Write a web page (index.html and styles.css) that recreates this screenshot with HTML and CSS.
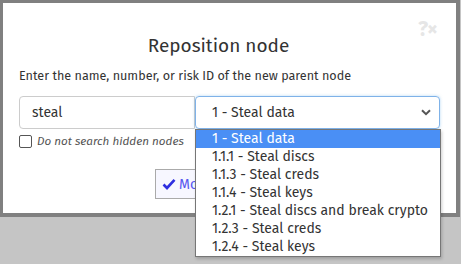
FILE: index.html
```html
<!DOCTYPE html>
<html lang="en">
<head>
  <meta charset="UTF-8" />
  <meta name="viewport" content="width=device-width, initial-scale=1.0"/>
  <title>Reposition node</title>
  <link rel="stylesheet" href="styles.css">
</head>
<body>
  <div class="dialog">
    <div class="dialog-tools">
      <span class="tool">?</span><span class="tool">&times;</span>
    </div>
    <h1 class="dialog-title">Reposition node</h1>
    <p class="hint">Enter the name, number, or risk ID of the new parent node</p>

    <div class="pick-row">
      <div class="text-box">steal</div>
      <div class="select-box">
        <span>1 - Steal data</span>
        <svg class="chevron" width="10" height="7" viewBox="0 0 10 7">
          <path d="M1 1.2 L5 5.2 L9 1.2" fill="none" stroke="#555" stroke-width="2"/>
        </svg>
        <!-- open option list -->
        <ul class="options">
          <li class="selected">1 - Steal data</li>
          <li>1.1.1 - Steal discs</li>
          <li>1.1.3 - Steal creds</li>
          <li>1.1.4 - Steal keys</li>
          <li>1.2.1 - Steal discs and break crypto</li>
          <li>1.2.3 - Steal creds</li>
          <li>1.2.4 - Steal keys</li>
        </ul>
      </div>
    </div>

    <label class="check-row">
      <span class="check-box"></span>
      <span class="check-label">Do not search hidden nodes</span>
    </label>

    <div class="actions">
      <button class="move-btn">
        <svg width="14" height="12" viewBox="0 0 14 12">
          <path d="M1.5 6.5 L5 10 L12.5 1.8" fill="none" stroke="#2e2ee0" stroke-width="2.6"/>
        </svg>
        Move
      </button>
    </div>
  </div>
  <div class="backdrop"></div>
</body>
</html>
```

FILE: styles.css
```css
body {
  margin: 0;
  background: #c5c5c5;
  font-family: 'Fira Sans', 'Open Sans', sans-serif;
  color: #333;
  min-height: 264px;
}

.dialog {
  position: relative;
  height: 210px;
  background: #fff;
  border: 3px solid #808080;
  border-bottom-width: 4px;
  border-right-width: 4px;
  padding: 0 16px;
  width: 421px;
}

.backdrop {
  height: 46px;
}

.dialog-tools {
  position: absolute;
  top: 13px;
  right: 19px;
  color: #e6e6e6;
  font-weight: bold;
  font-size: 21px;
  letter-spacing: -1px;
}

.dialog-title {
  margin: 0;
  padding: 29px 22px 0 0;
  font-size: 19px;
  font-weight: normal;
  text-align: center;
  line-height: 28px;
}

.hint {
  margin: 7px 0 0;
  font-size: 12.6px;
  line-height: 18px;
}

.pick-row {
  display: flex;
  margin-top: 11px;
}

.text-box {
  width: 162px;
  height: 31px;
  border: 1px solid #ccc;
  border-radius: 4px 0 0 4px;
  padding-left: 12px;
  font-size: 14px;
  line-height: 31px;
}

.select-box {
  position: relative;
  flex: 1;
  height: 31px;
  border: 1px solid #7fb2e8;
  border-radius: 4px;
  box-shadow: 0 0 3px rgba(102, 175, 233, 0.5);
  padding-left: 16px;
  font-size: 14px;
  line-height: 31px;
  display: flex;
  align-items: center;
}

.select-box span {
  flex: 1;
}

.chevron {
  margin-right: 8px;
}

.options {
  position: absolute;
  left: -1px;
  top: 32px;
  width: 244px;
  margin: 0;
  padding: 0;
  list-style: none;
  background: #fff;
  border: 1px solid #767676;
  box-shadow: 1px 2px 3px rgba(0, 0, 0, 0.2);
  z-index: 2;
}

.options li {
  height: 18px;
  line-height: 18px;
  padding-left: 16px;
  font-size: 14px;
}

.options li.selected {
  background: #4a8ff5;
  color: #fff;
}

.check-row {
  display: flex;
  align-items: center;
  margin-top: 5px;
}

.check-box {
  width: 11px;
  height: 11px;
  border: 1px solid #555;
  border-radius: 2px;
}

.check-label {
  margin-left: 5px;
  font-size: 11.7px;
  font-style: italic;
  color: #555;
}

.actions {
  display: flex;
  margin-top: 21px;
  padding-left: 136px;
}

.move-btn {
  display: flex;
  align-items: center;
  gap: 3px;
  height: 30px;
  width: 90px;
  padding: 0 6px;
  background: #f7f7ff;
  border: 1px solid #aaa;
  color: #5858f0;
  font-family: inherit;
  font-size: 14px;
}
```
